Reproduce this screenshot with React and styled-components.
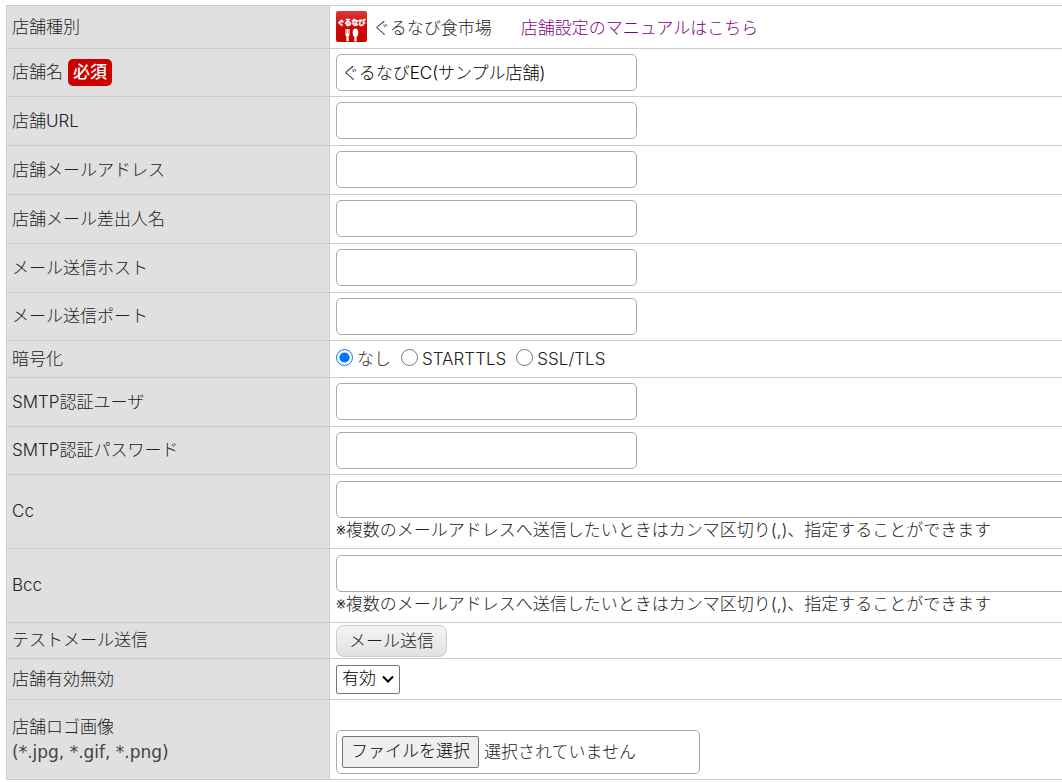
import React, { useState } from 'react';
import styled, { createGlobalStyle } from 'styled-components';

const GlobalStyle = createGlobalStyle`
	body {
		margin: 0;
		background-color: #fff;
		overflow-x: hidden;
	}
	body, input, select, button {
		font-family: Inter, 'Noto Sans CJK JP', sans-serif;
		font-size: 17px;
		font-weight: 300;
	}
`;

const Form = styled.form`
	padding: 5px 0 0 6px;
	color: #222;
	line-height: 25px;
	overflow: hidden;
`;

const Table = styled.table`
	width: 100%;
	table-layout: fixed;
	border-collapse: separate;
	border-spacing: 0;
	border-top: 1px solid #ccc;
`;

const Heading = styled.th`
	box-sizing: border-box;
	width: 324px;
	height: ${(props) => props.$height}px;
	padding: 0 5px;
	background-color: #e0e0e0;
	border: solid #ccc;
	border-width: 0 1px 1px;
	font-weight: 300;
	text-align: left;
	vertical-align: middle;
`;

const Cell = styled.td`
	box-sizing: border-box;
	padding: 0 6px;
	border-bottom: 1px solid #ccc;
	vertical-align: ${(props) => props.$align || 'middle'};
`;

const FieldCell = styled(Cell)`
	padding-bottom: 1px;
`;

const Required = styled.span`
	display: inline-block;
	margin-left: 5px;
	padding: 1px 5px;
	border-radius: 5px;
	background-color: #c00;
	color: #fff;
	font-weight: 500;
`;

const TextField = styled.input`
	box-sizing: border-box;
	display: block;
	width: ${(props) => (props.$wide ? '120%' : '301px')};
	height: 37px;
	padding: 0 5px 2px;
	border: 1px solid #aaa;
	border-radius: 5px;
	background-color: #fff;
	color: #000;
`;

const Note = styled.p`
	margin: 0;
	white-space: nowrap;
`;

const Formats = styled.span`
	display: block;
	font-family: 'DejaVu Sans', sans-serif;
	font-weight: 400;
	color: #444;
`;

const Shop = styled.div`
	display: flex;
	align-items: center;
`;

const ShopText = styled.div`
	display: flex;
	gap: 29px;
	padding: 3px 0 0 6px;
`;

const ManualLink = styled.a`
	color: #800080;
	text-decoration: none;
`;

const RadioGroup = styled.div`
	display: flex;
	gap: 10px;
`;

const RadioLabel = styled.label`
	display: flex;
	align-items: center;
	gap: 4px;
`;

const Radio = styled.input`
	width: 17px;
	height: 17px;
	margin: 0 0 4px;
`;

const SendButton = styled.button`
	display: block;
	box-sizing: border-box;
	height: 32px;
	padding: 0 12px 2px;
	border: 1px solid #ccc;
	border-radius: 8px;
	background: linear-gradient(#f4f4f4, #e2e2e2);
	color: #222;
`;

const SelectBox = styled.div`
	display: grid;
	width: 64px;
	align-items: center;

	> * {
		grid-area: 1 / 1;
	}
	> svg {
		justify-self: end;
		margin-right: 6px;
		pointer-events: none;
	}
`;

const Select = styled.select`
	appearance: none;
	box-sizing: border-box;
	width: 100%;
	height: 29px;
	padding: 0 5px 2px;
	border: 1px solid #767676;
	border-radius: 2px;
	background-color: #fff;
	color: #000;
`;

const FileBox = styled.div`
	box-sizing: border-box;
	display: flex;
	align-items: center;
	gap: 5px;
	width: 364px;
	height: 44px;
	margin-bottom: 5px;
	padding: 0 5px;
	border: 1px solid #aaa;
	border-radius: 5px;
`;

const FileInput = styled.input`
	position: absolute;
	width: 1px;
	height: 1px;
	opacity: 0;
`;

const FileButton = styled.label`
	box-sizing: border-box;
	height: 32px;
	padding: 2px 8px;
	border: 1px solid #767676;
	border-radius: 2px;
	background-color: #efefef;
	color: #000;
`;

const ShopLogo = () => (
	<svg width='31' height='31' viewBox='0 0 31 31' aria-hidden='true'>
		<defs>
			<linearGradient id='logoRed' x1='0' y1='0' x2='0' y2='1'>
				<stop offset='0' stopColor='#dc3838' />
				<stop offset='0.55' stopColor='#cd0808' />
				<stop offset='1' stopColor='#c80000' />
			</linearGradient>
		</defs>
		<rect width='31' height='31' rx='2' fill='url(#logoRed)' />
		<text
			x='15.5'
			y='14'
			fill='#fff'
			stroke='#fff'
			strokeWidth='0.3'
			fontFamily='Noto Sans CJK JP, sans-serif'
			fontSize='7'
			fontWeight='900'
			textAnchor='middle'
		>
			ぐるなび
		</text>
		<path d='M9.4 18h1v4.6h.4v-4.6h1.4v4.6h.4v-4.6h1v5.6q0 1.4-1.1 1.8l.3 4.4q-1.3 1.2-2.6 0l.3-4.4q-1.1-.4-1.1-1.8z' fill='#fff' />
		<path d='M19.5 17.4c3.6 0 3.6 7 1 8.4l.2 4.2q-1.2 1-2.4 0l.2-4.2c-2.6-1.4-2.6-8.4 1-8.4z' fill='#fff' />
	</svg>
);

const hostFields = [
	{ id: 'url', label: '店舗URL', height: 49 },
	{ id: 'mail', label: '店舗メールアドレス', height: 49, type: 'email' },
	{ id: 'sender', label: '店舗メール差出人名', height: 49 },
	{ id: 'host', label: 'メール送信ホスト', height: 49 },
	{ id: 'port', label: 'メール送信ポート', height: 48 },
];

const smtpFields = [
	{ id: 'user', label: 'SMTP認証ユーザ', height: 49 },
	{ id: 'password', label: 'SMTP認証パスワード', height: 48, type: 'password' },
];

const copyFields = [
	{ id: 'cc', label: 'Cc' },
	{ id: 'bcc', label: 'Bcc' },
];

const encryptions = ['なし', 'STARTTLS', 'SSL/TLS'];

const FieldRow = ({ id, label, height, type = 'text' }) => (
	<tr>
		<Heading scope='row' $height={height}>
			<label htmlFor={id}>{label}</label>
		</Heading>
		<FieldCell>
			<TextField id={id} type={type} />
		</FieldCell>
	</tr>
);

const App = () => {
	const [encryption, setEncryption] = useState('なし');
	const [fileName, setFileName] = useState('');

	return (
		<Form onSubmit={(e) => e.preventDefault()}>
			<GlobalStyle />
			<Table>
				<tbody>
					<tr>
						<Heading scope='row' $height={43}>店舗種別</Heading>
						<FieldCell>
							<Shop>
								<ShopLogo />
								<ShopText>
									<span>ぐるなび食市場</span>
									<ManualLink href='#manual'>店舗設定のマニュアルはこちら</ManualLink>
								</ShopText>
							</Shop>
						</FieldCell>
					</tr>
					<tr>
						<Heading scope='row' $height={48}>
							<label htmlFor='name'>店舗名</label>
							<Required>必須</Required>
						</Heading>
						<Cell>
							<TextField id='name' type='text' defaultValue='ぐるなびEC(サンプル店舗)' />
						</Cell>
					</tr>
					{hostFields.map((field) => (
						<FieldRow key={field.id} {...field} />
					))}
					<tr>
						<Heading scope='row' $height={37}>暗号化</Heading>
						<Cell>
							<RadioGroup role='radiogroup' aria-label='暗号化'>
								{encryptions.map((item) => (
									<RadioLabel key={item}>
										<Radio
											type='radio'
											name='encryption'
											checked={encryption === item}
											onChange={() => setEncryption(item)}
										/>
										{item}
									</RadioLabel>
								))}
							</RadioGroup>
						</Cell>
					</tr>
					{smtpFields.map((field) => (
						<FieldRow key={field.id} {...field} />
					))}
					{copyFields.map((field) => (
						<tr key={field.id}>
							<Heading scope='row' $height={74}>
								<label htmlFor={field.id}>{field.label}</label>
							</Heading>
							<Cell>
								<TextField id={field.id} type='text' $wide />
								<Note>※複数のメールアドレスへ送信したいときはカンマ区切り(,)、指定することができます</Note>
							</Cell>
						</tr>
					))}
					<tr>
						<Heading scope='row' $height={36}>テストメール送信</Heading>
						<Cell>
							<SendButton type='button'>メール送信</SendButton>
						</Cell>
					</tr>
					<tr>
						<Heading scope='row' $height={41}>
							<label htmlFor='status'>店舗有効無効</label>
						</Heading>
						<Cell>
							<SelectBox>
								<Select id='status'>
									<option>有効</option>
									<option>無効</option>
								</Select>
								<svg width='12' height='8' viewBox='0 0 12 8' aria-hidden='true'>
									<path d='M1 1.5l5 5 5-5' fill='none' stroke='#000' strokeWidth='2' />
								</svg>
							</SelectBox>
						</Cell>
					</tr>
					<tr>
						<Heading scope='row' $height={80}>
							<label htmlFor='logo'>
								店舗ロゴ画像
								<Formats>(*.jpg, *.gif, *.png)</Formats>
							</label>
						</Heading>
						<Cell $align='bottom'>
							<FileBox>
								<FileInput
									id='logo'
									type='file'
									accept='.jpg,.gif,.png'
									onChange={(e) => setFileName(e.target.files[0]?.name || '')}
								/>
								<FileButton htmlFor='logo'>ファイルを選択</FileButton>
								<span>{fileName || '選択されていません'}</span>
							</FileBox>
						</Cell>
					</tr>
				</tbody>
			</Table>
		</Form>
	);
};

export default App;
